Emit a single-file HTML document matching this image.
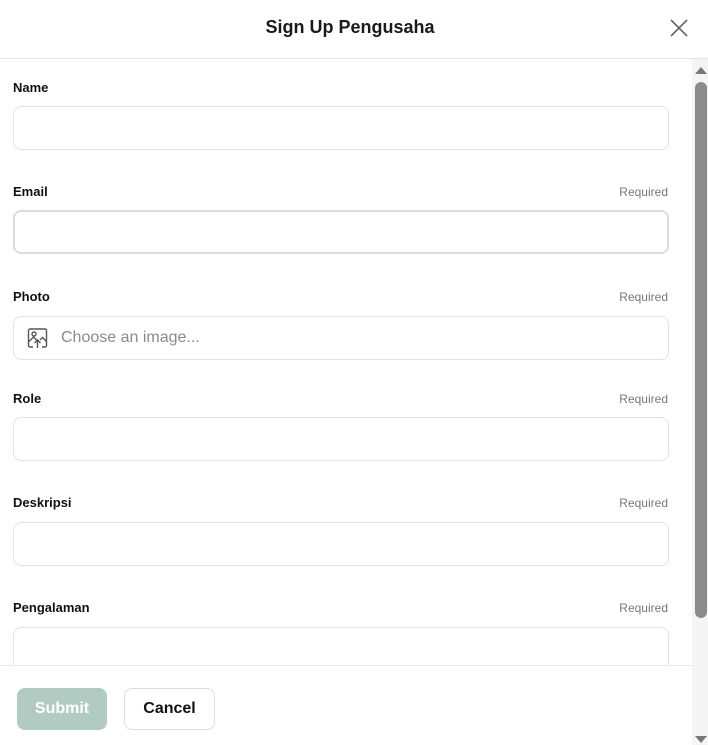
<!DOCTYPE html>
<html><head><meta charset="utf-8"><style>
*{box-sizing:border-box;margin:0;padding:0}
body{width:708px;height:745px;background:#fff;font-family:"Liberation Sans",sans-serif;position:relative;overflow:hidden;color:#111}
.title{position:absolute;top:17px;left:0;width:700px;text-align:center;font-size:18px;font-weight:bold;color:#1a1a1a}
.hdr{position:absolute;top:58px;left:0;width:708px;height:1px;background:#e4e4e4}
.lbl{position:absolute;left:13px;font-size:13px;font-weight:bold;color:#111}
.req{position:absolute;right:40px;font-size:12px;color:#777}
.inp{position:absolute;left:13px;width:656px;height:44px;border:1px solid #e2e2e2;border-radius:8px;background:#fff}
.track{position:absolute;left:692px;top:59px;width:16px;height:686px;background:#f4f4f4}
.thumb{position:absolute;left:695px;top:82px;width:12px;height:536px;background:#8b8b8b;border-radius:6px}
.foot{position:absolute;top:665px;left:0;width:692px;height:80px;background:#fff;border-top:1px solid #e8e8e8}
.btn{position:absolute;top:688px;height:42px;border-radius:8px;font-size:16px;font-weight:bold;display:flex;align-items:center;justify-content:center}
</style></head><body>
<div class="title">Sign Up Pengusaha</div>
<svg style="position:absolute;left:669px;top:18px" width="20" height="20" viewBox="0 0 20 20"><path d="M2 2L18 18M18 2L2 18" stroke="#666" stroke-width="1.6" fill="none"/></svg>
<div class="hdr"></div>

<div class="lbl" style="top:80px">Name</div>
<div class="inp" style="top:106px"></div>

<div class="lbl" style="top:184px">Email</div><div class="req" style="top:185px">Required</div>
<div class="inp" style="top:210px;border:2px solid #dcdcdc"></div>

<div class="lbl" style="top:289px">Photo</div><div class="req" style="top:290px">Required</div>
<div class="inp" style="top:316px"></div>
<svg style="position:absolute;left:27px;top:328px" width="21" height="21" viewBox="0 0 21 21" fill="none" stroke="#555" stroke-width="1.4"><path d="M6 19H3a1.5 1.5 0 0 1-1.5-1.5v-15A1.5 1.5 0 0 1 3 1h15a1.5 1.5 0 0 1 1.5 1.5v15A1.5 1.5 0 0 1 18 19h-3"/><circle cx="7" cy="6" r="2"/><path d="M1.5 14l5-5 3 3M13 12l2.5-2.5 4 4"/><path d="M10.5 20v-8M7.5 15l3-3 3 3"/></svg>
<div style="position:absolute;left:61px;top:329px;font-size:16px;color:#8a8a8a">Choose an image...</div>

<div class="lbl" style="top:391px">Role</div><div class="req" style="top:392px">Required</div>
<div class="inp" style="top:417px"></div>

<div class="lbl" style="top:495px">Deskripsi</div><div class="req" style="top:496px">Required</div>
<div class="inp" style="top:522px"></div>

<div class="lbl" style="top:600px">Pengalaman</div><div class="req" style="top:601px">Required</div>
<div class="inp" style="top:627px"></div>

<div class="foot"></div>
<div class="btn" style="left:17px;width:90px;background:#b2cbc1;color:#fff">Submit</div>
<div class="btn" style="left:124px;width:91px;border:1px solid #ddd;background:#fff;color:#111">Cancel</div>

<div class="track"></div>
<div class="thumb"></div>
<svg style="position:absolute;left:694px;top:65px" width="14" height="10"><path d="M1 9L7 2L13 9Z" fill="#777"/></svg>
<svg style="position:absolute;left:694px;top:735px" width="14" height="10"><path d="M1 1L7 8L13 1Z" fill="#777"/></svg>
</body></html>
